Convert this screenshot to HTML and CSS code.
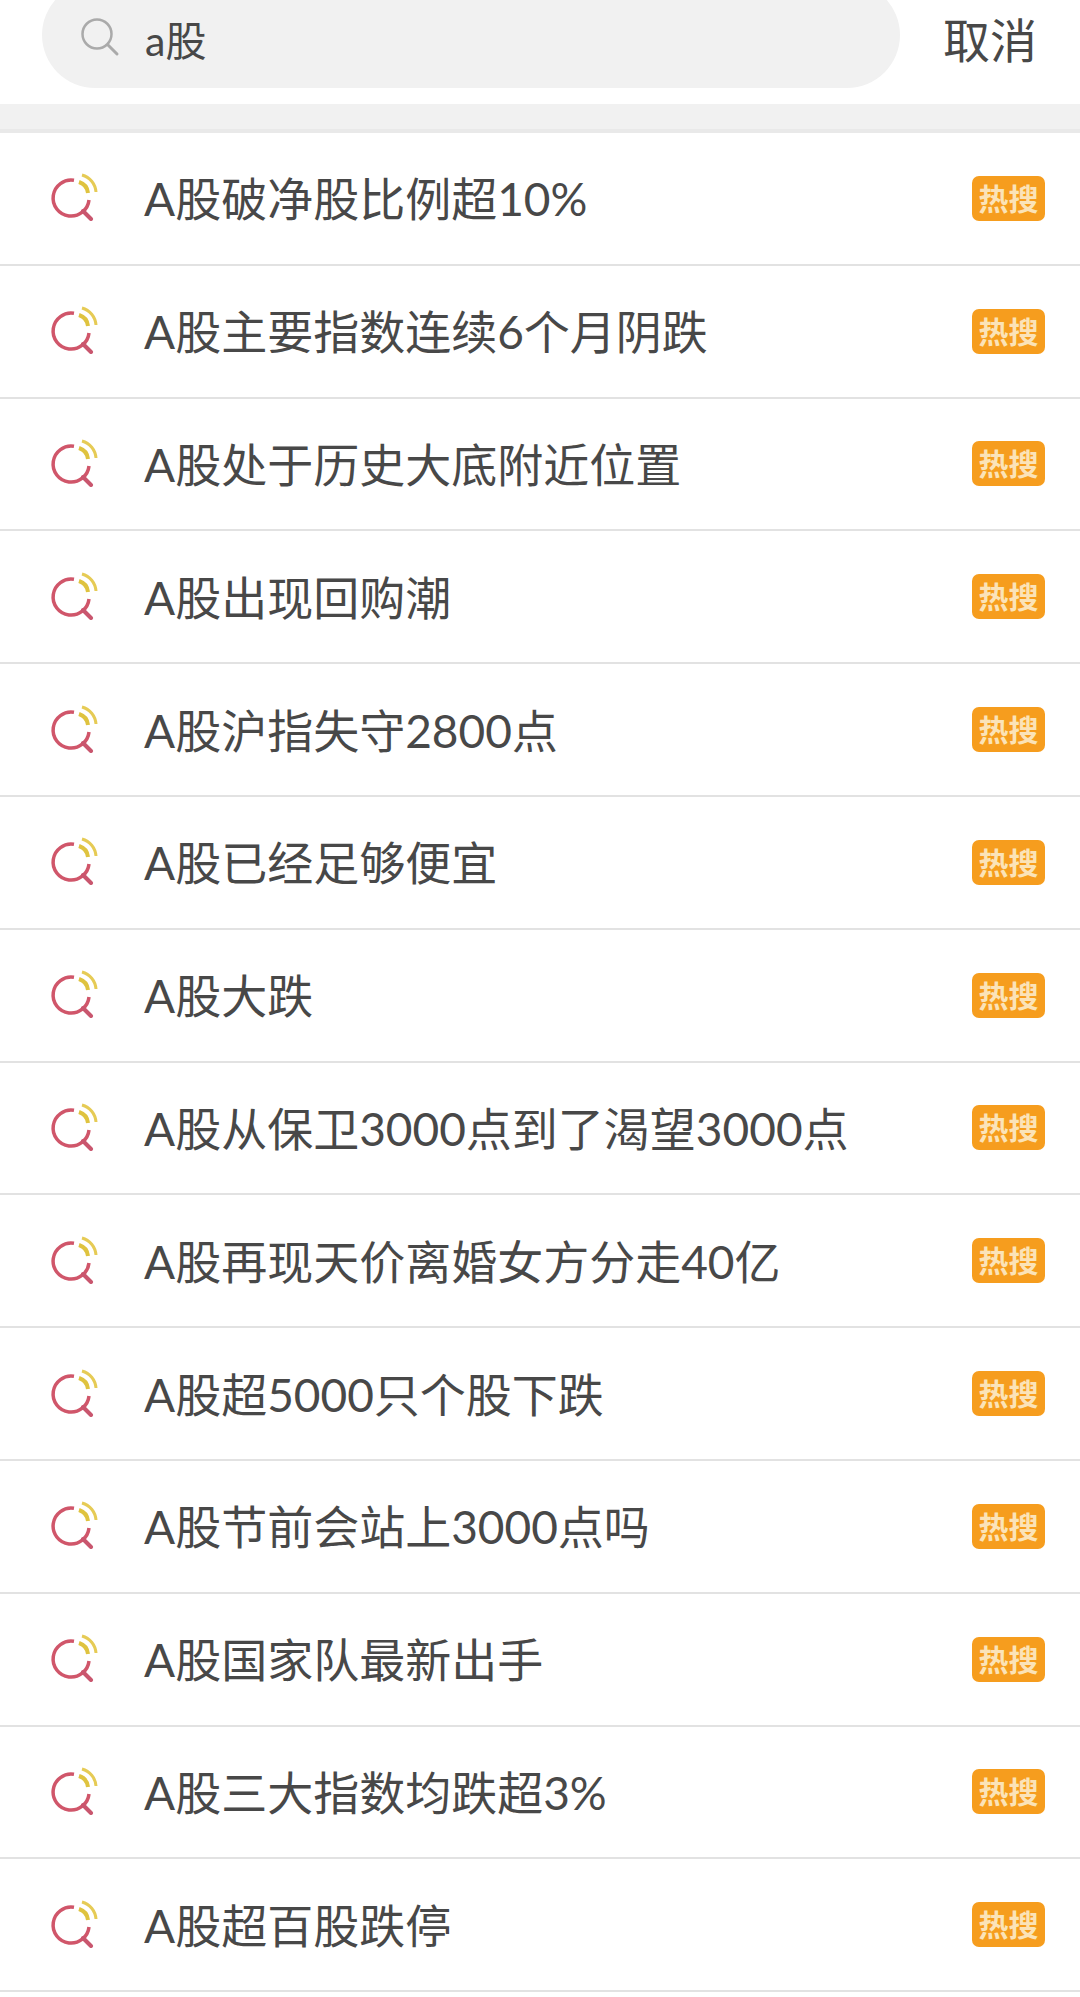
FILE: index.html
```html
<!DOCTYPE html>
<html lang="zh-CN">
<head>
  <meta charset="UTF-8">
  <title>搜索</title>
  <link rel="stylesheet" href="styles.css">
</head>
<body>

  <svg class="svg-defs" width="0" height="0">
    <symbol id="hot-icon" viewBox="0 0 48 48">
      <path d="M24 7.3A18 18 0 1 0 39 27" fill="none" stroke="#d0566a" stroke-width="3.500"/>
      <path d="M33 38l8 8" fill="none" stroke="#c9566e" stroke-width="4" stroke-linecap="round"/>
      <path d="M29 9a13 13 0 0 1 9 11" fill="none" stroke="#dfc33f" stroke-width="4"/>
      <path d="M32 2a19 19 0 0 1 14 17" fill="none" stroke="#e6cb55" stroke-width="3"/>
    </symbol>
  </svg>

  <div class="search-header">
    <div class="search-box">
      <svg class="search-icon" viewBox="0 0 40 40">
        <circle cx="17" cy="17" r="14.5" fill="none" stroke="#aaa" stroke-width="2.5"/>
        <path d="M28 28l9 9" fill="none" stroke="#aaa" stroke-width="3" stroke-linecap="round"/>
      </svg>
      <span class="search-text">a股</span>
    </div>
    <span class="cancel">取消</span>
  </div>

  <div class="gap"></div>

  <ul class="hot-list">
    <li><svg class="hot-icon"><use href="#hot-icon"/></svg><span class="title">A股破净股比例超10%</span><span class="tag">热搜</span></li>
    <li><svg class="hot-icon"><use href="#hot-icon"/></svg><span class="title">A股主要指数连续6个月阴跌</span><span class="tag">热搜</span></li>
    <li><svg class="hot-icon"><use href="#hot-icon"/></svg><span class="title">A股处于历史大底附近位置</span><span class="tag">热搜</span></li>
    <li><svg class="hot-icon"><use href="#hot-icon"/></svg><span class="title">A股出现回购潮</span><span class="tag">热搜</span></li>
    <li><svg class="hot-icon"><use href="#hot-icon"/></svg><span class="title">A股沪指失守2800点</span><span class="tag">热搜</span></li>
    <li><svg class="hot-icon"><use href="#hot-icon"/></svg><span class="title">A股已经足够便宜</span><span class="tag">热搜</span></li>
    <li><svg class="hot-icon"><use href="#hot-icon"/></svg><span class="title">A股大跌</span><span class="tag">热搜</span></li>
    <li><svg class="hot-icon"><use href="#hot-icon"/></svg><span class="title">A股从保卫3000点到了渴望3000点</span><span class="tag">热搜</span></li>
    <li><svg class="hot-icon"><use href="#hot-icon"/></svg><span class="title">A股再现天价离婚女方分走40亿</span><span class="tag">热搜</span></li>
    <li><svg class="hot-icon"><use href="#hot-icon"/></svg><span class="title">A股超5000只个股下跌</span><span class="tag">热搜</span></li>
    <li><svg class="hot-icon"><use href="#hot-icon"/></svg><span class="title">A股节前会站上3000点吗</span><span class="tag">热搜</span></li>
    <li><svg class="hot-icon"><use href="#hot-icon"/></svg><span class="title">A股国家队最新出手</span><span class="tag">热搜</span></li>
    <li><svg class="hot-icon"><use href="#hot-icon"/></svg><span class="title">A股三大指数均跌超3%</span><span class="tag">热搜</span></li>
    <li><svg class="hot-icon"><use href="#hot-icon"/></svg><span class="title">A股超百股跌停</span><span class="tag">热搜</span></li>
  </ul>

</body>
</html>
```

FILE: styles.css
```css
html, body {
  margin: 0;
  height: 1997px;
  overflow: hidden;
}
body {
  background-color: #fff;
  color: #484848;
  font-family: "Lato", "Noto Sans CJK SC", sans-serif;
}
.svg-defs {
  display: block;
}
.search-header {
  height: 104px;
  box-sizing: border-box;
  padding-left: 42px;
  display: flex;
  align-items: flex-start;
}
.search-box {
  width: 858px;
  height: 106px;
  margin-top: -18px;
  padding-top: 8px;
  background-color: #f1f1f1;
  border-radius: 53px;
  display: flex;
  align-items: center;
  padding-left: 38px;
  box-sizing: border-box;
}
.search-icon {
  width: 40px;
  height: 40px;
  margin-top: -4px;
}
.search-text {
  font-size: 41px;
  margin-left: 25px;
  margin-top: -2px;
}
.cancel {
  font-size: 47px;
  line-height: 80px;
  margin-left: 43px;
}
.gap {
  height: 25px;
  background-color: #f1f1f1;
  border-bottom: 4px solid #e9e9e9;
}
.hot-list {
  list-style: none;
  margin: 0;
  padding: 0;
}
.hot-list li {
  height: 132.8px;
  box-sizing: border-box;
  border-bottom: 2px solid #e2e2e2;
  padding-left: 50px;
  padding-right: 35px;
  display: flex;
  align-items: center;
}
.hot-icon {
  width: 48px;
  height: 48px;
  flex: none;
  margin-bottom: 2px;
}
.title {
  font-size: 46px;
  margin-left: 46px;
  margin-bottom: 4px;
  flex: 1;
  white-space: nowrap;
}
.tag {
  width: 73px;
  height: 45px;
  line-height: 45px;
  border-radius: 7px;
  background-color: #f69d1e;
  color: #fbe3b8;
  font-size: 30px;
  font-weight: 700;
  text-align: center;
}
```
